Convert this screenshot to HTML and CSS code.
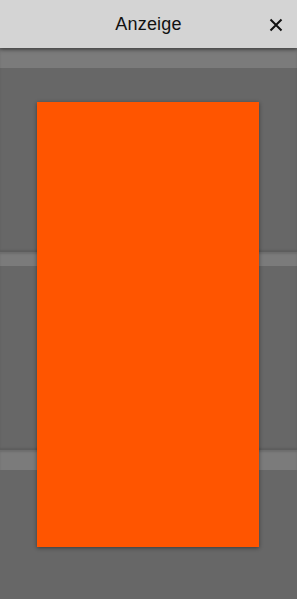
FILE: index.html
```html
<!DOCTYPE html>
<html lang="de">
<head>
    <meta charset="UTF-8">
    <meta name="viewport" content="width=device-width, initial-scale=1.0">
    <title>Anzeige</title>
    <link rel="stylesheet" href="styles.css">
</head>
<body>
    <div class="header">
        <div class="title">Anzeige</div>
        <div class="close">
            <svg width="14" height="14" viewBox="0 0 14 14">
                <path d="M1.5 1.5 L12.5 12.5 M12.5 1.5 L1.5 12.5" stroke="#111" stroke-width="2" fill="none"/>
            </svg>
        </div>
    </div>
    <div class="backdrop">
        <div class="strip strip-top"></div>
        <div class="panel"></div>
        <div class="strip strip-mid"></div>
        <div class="panel"></div>
        <div class="strip strip-low"></div>
        <div class="panel panel-last"></div>
    </div>
    <!-- Anzeige liegt über dem Hintergrund -->
    <div class="ad"></div>
</body>
</html>
```

FILE: styles.css
```css
body{
    margin: 0;
    width: 297px;
    height: 599px;
    overflow: hidden;
    background-color: #676767;
    font-family: "Liberation Sans", Arial, sans-serif;
    position: relative;
}

.header{
    height: 48px;
    background-color: #d4d4d4;
    display: flex;
    align-items: center;
    justify-content: center;
    position: relative;
    z-index: 2;
    box-shadow: 0 2px 4px rgba(0,0,0,0.35);
}

.title{
    font-size: 18px;
    color: #111;
    letter-spacing: 0.2px;
}

.close{
    position: absolute;
    right: 14px;
    top: 18px;
    width: 14px;
    height: 14px;
}

.close svg{
    display: block;
}

.backdrop{
    display: flex;
    flex-direction: column;
}

.strip{
    background-color: #7b7b7b;
    box-shadow: inset 0 2px 2px rgba(0,0,0,0.12);
}

.strip-top{
    height: 20px;
}
.strip-mid{
    height: 14px;
}
.strip-low{
    height: 20px;
}

.panel{
    height: 184px;
    background-color: #676767;
    box-shadow: inset 0 -2px 2px rgba(0,0,0,0.1);
}

.panel-last{
    height: 129px;
    box-shadow: none;
}

.ad{
    position: absolute;
    left: 37px;
    top: 102px;
    width: 222px;
    height: 445px;
    background-color: #ff5500;
    box-shadow: 0 1px 4px rgba(0,0,0,0.45);
    z-index: 3;
}
```
